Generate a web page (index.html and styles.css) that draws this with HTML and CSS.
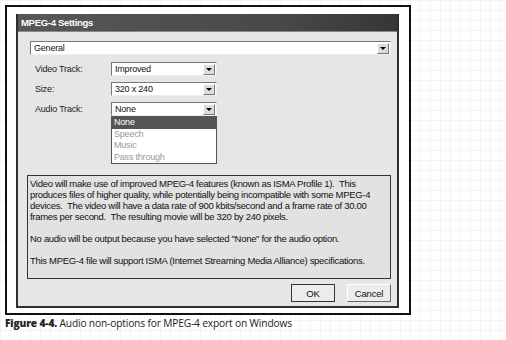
FILE: index.html
```html
<!DOCTYPE html>
<html lang="en">
<head>
    <meta charset="UTF-8">
    <title>MPEG-4 Settings</title>
    <link rel="stylesheet" href="styles.css">
</head>
<body>
    <div class="page">
        <div class="frame">
            <div class="dialog">
                <div class="titlebar">MPEG-4 Settings</div>
                <div class="content">
                    <div class="combo wide">
                        <span class="value">General</span>
                        <span class="arrow"></span>
                    </div>

                    <div class="row">
                        <span class="label">Video Track:</span>
                        <div class="combo">
                            <span class="value">Improved</span>
                            <span class="arrow"></span>
                        </div>
                    </div>
                    <div class="row">
                        <span class="label">Size:</span>
                        <div class="combo">
                            <span class="value">320 x 240</span>
                            <span class="arrow"></span>
                        </div>
                    </div>
                    <div class="row">
                        <span class="label">Audio Track:</span>
                        <div class="combo">
                            <span class="value">None</span>
                            <span class="arrow"></span>
                            <ul class="list">
                                <li class="selected">None</li>
                                <li>Speech</li>
                                <li>Music</li>
                                <li>Pass through</li>
                            </ul>
                        </div>
                    </div>

                    <div class="info">
                        <p>Video will make use of improved MPEG-4 features (known as ISMA Profile 1).&nbsp; This produces files of higher quality, while potentially being incompatible with some MPEG-4 devices.&nbsp; The video will have a data rate of 900 kbits/second and a frame rate of 30.00 frames per second.&nbsp; The resulting movie will be 320 by 240 pixels.</p>
                        <p>No audio will be output because you have selected "None" for the audio option.</p>
                        <p>This MPEG-4 file will support ISMA (Internet Streaming Media Alliance) specifications.</p>
                    </div>

                    <div class="buttons">
                        <button class="btn default">OK</button>
                        <button class="btn">Cancel</button>
                    </div>
                </div>
            </div>
        </div>
        <p class="caption"><b>Figure 4-4.</b> Audio non-options for MPEG-4 export on Windows</p>
    </div>
</body>
</html>
```

FILE: styles.css
```css
body {
    margin: 0;
    background-color: #fff;
    background-image:
        linear-gradient(to right, #f4f4f4 1px, transparent 1px),
        linear-gradient(to bottom, #f4f4f4 1px, transparent 1px);
    background-size: 10px 10px;
    font-family: "Liberation Sans", Arial, sans-serif;
}
.page { padding: 5px; }

.frame {
    width: fit-content;
    border: 2px solid #111;
    background: #fff;
    padding: 7px 10px 5px 9px;
}

.dialog {
    width: 379px;
    border: 2px solid #2e2e2e;
    border-top: 0;
    background: #e6e6e6;
    padding-bottom: 4px;
}
.titlebar {
    height: 17px;
    line-height: 17px;
    padding-left: 3px;
    background: linear-gradient(to right, #585858, #484848 70%, #363636);
    border-bottom: 1px solid #888;
    color: #fff;
    font-weight: bold;
    font-size: 9.5px;
    letter-spacing: -0.3px;
}
.content { padding: 9px 6px 0 9px; }

.combo {
    position: relative;
    display: flex;
    align-items: center;
    width: 106px;
    height: 14px;
    background: #fff;
    border: 1px solid;
    border-color: #777 #eee #eee #777;
    box-sizing: border-box;
    font-size: 9px;
    letter-spacing: -0.2px;
}
.combo.wide { width: 361px; margin-left: 3px; margin-bottom: 4px; }
.combo .value { flex: 1; padding-left: 3px; color: #111; }
.combo .arrow {
    width: 10px;
    height: 9px;
    margin-right: 1px;
    background: #dcdcdc;
    border: 1px solid;
    border-color: #fff #777 #777 #fff;
    position: relative;
}
.combo .arrow::after {
    content: "";
    position: absolute;
    left: 2px;
    top: 3px;
    border-left: 3px solid transparent;
    border-right: 3px solid transparent;
    border-top: 3px solid #000;
}

.row {
    display: flex;
    align-items: center;
    height: 20px;
    font-size: 9px;
    letter-spacing: -0.2px;
    color: #222;
}
.row .label { width: 76px; padding-left: 8px; }

.list {
    position: absolute;
    top: 13px;
    left: -1px;
    width: 106px;
    margin: 0;
    padding: 0;
    list-style: none;
    background: #fff;
    border: 1px solid #555;
    box-sizing: border-box;
    font-size: 9px;
    color: #9a9a9a;
}
.list li { height: 11.5px; line-height: 11.5px; padding-left: 2px; }
.list li.selected { background: #555; color: #fff; }

.info {
    margin-top: 56px;
    width: 364px;
    height: 104px;
    box-sizing: border-box;
    border: 1px solid #333;
    background: #e2e2e2;
    padding: 2px 2px;
    font-size: 9.5px;
    letter-spacing: -0.3px;
    line-height: 11px;
    color: #111;
}
.info p { margin: 0 0 11px; }

.buttons {
    display: flex;
    justify-content: flex-end;
    gap: 12px;
    width: 364px;
    margin-top: 5px;
}
.btn {
    width: 44px;
    height: 18px;
    padding: 0;
    background: #ececec;
    border: 1px solid;
    border-color: #fff #666 #666 #fff;
    font-family: "Liberation Sans", Arial, sans-serif;
    font-size: 9.5px;
    letter-spacing: -0.2px;
    color: #111;
}
.btn.default { border: 1px solid #333; }

.caption {
    margin: 1px 0 0;
    font-family: "Open Sans", sans-serif;
    font-size: 10.2px;
    letter-spacing: -0.15px;
    line-height: 14px;
    color: #222;
}
.caption b { font-weight: 800; }
```
